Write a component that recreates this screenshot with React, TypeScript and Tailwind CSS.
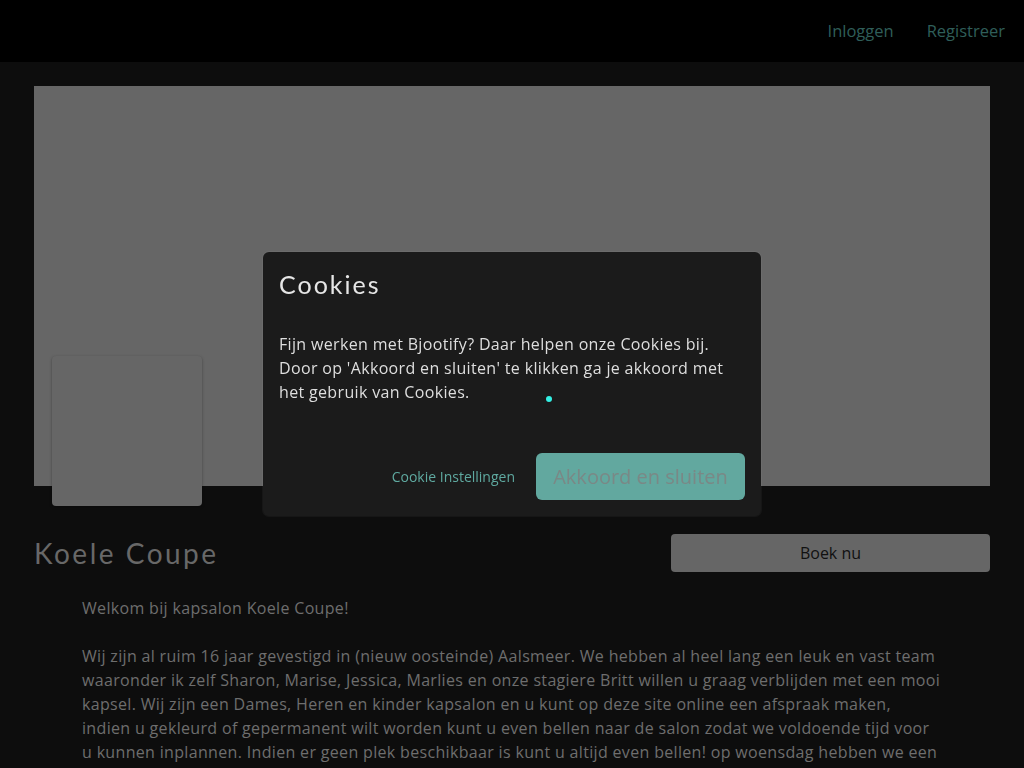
export default function App() {
    return (
        <div className="min-h-screen bg-[#0d0d0d] font-['Open_Sans',sans-serif]">
            <header className="h-[62px] bg-black flex justify-end items-center pr-[19px] gap-[33px]">
                <a className="text-[16.5px] text-[#2f5e59]">Inloggen</a>
                <a className="text-[16.5px] text-[#2f5e59]">Registreer</a>
            </header>

            <main className="px-[34px] pt-[24px]">
                <div className="relative h-[400px] bg-[#666666]">
                    <div className="absolute left-[18px] top-[270px] w-[150px] h-[150px] bg-[#666666] rounded-[4px] shadow-[0_1px_3px_rgba(0,0,0,0.35)]"></div>
                </div>

                <div className="mt-[48px] h-[38px] flex justify-between items-center">
                    <h1 className="text-[28px] leading-[38px] text-[#686868] font-['Lato',sans-serif] tracking-[2.5px]">Koele Coupe</h1>
                    <button className="w-[319px] h-[38px] bg-[#666666] rounded-[4px] text-[16px] text-[#111111]">
                        Boek nu
                    </button>
                </div>

                <div className="mt-[24px] px-[48px] text-[16px] leading-[24px] tracking-[0.33px] text-[#6e6e6e]">
                    <p>Welkom bij kapsalon Koele Coupe!</p>
                    <p className="mt-[24px]">
                        Wij zijn al ruim 16 jaar gevestigd in (nieuw oosteinde) Aalsmeer. We hebben al heel lang een leuk en vast team waaronder ik zelf Sharon, Marise, Jessica, Marlies en onze stagiere Britt willen u graag verblijden met een mooi kapsel. Wij zijn een Dames, Heren en kinder kapsalon en u kunt op deze site online een afspraak maken, indien u gekleurd of gepermanent wilt worden kunt u even bellen naar de salon zodat we voldoende tijd voor u kunnen inplannen. Indien er geen plek beschikbaar is kunt u altijd even bellen! op woensdag hebben we een
                    </p>
                </div>
            </main>

            {/* cookie dialog */}
            <div className="fixed inset-0 flex items-center justify-center">
                <div className="relative w-[498px] h-[264px] bg-[#1b1b1b] rounded-[6px] shadow-[0_0_0_1px_rgba(255,255,255,0.04)] p-[16px] flex flex-col">
                    <h2 className="text-[25px] leading-[32px] text-[#e6e6e6] font-['Lato',sans-serif] tracking-[2px]">Cookies</h2>
                    <p className="mt-[32px] text-[16px] leading-[24px] tracking-[0.34px] text-[#dedede]">
                        Fijn werken met Bjootify? Daar helpen onze Cookies bij. Door op 'Akkoord en sluiten' te klikken ga je akkoord met het gebruik van Cookies.
                    </p>
                    <div className="absolute left-[283px] top-[144px] w-[6px] h-[6px] rounded-full bg-[#33f0e4]"></div>
                    <div className="mt-auto flex justify-end items-center gap-[21px]">
                        <a className="text-[14px] text-[#5fa9a0]">Cookie Instellingen</a>
                        <button className="w-[209px] h-[47px] bg-[#62a89f] rounded-[6px] text-[20px] text-[#7a8886]">
                            Akkoord en sluiten
                        </button>
                    </div>
                </div>
            </div>
        </div>
    );
}
